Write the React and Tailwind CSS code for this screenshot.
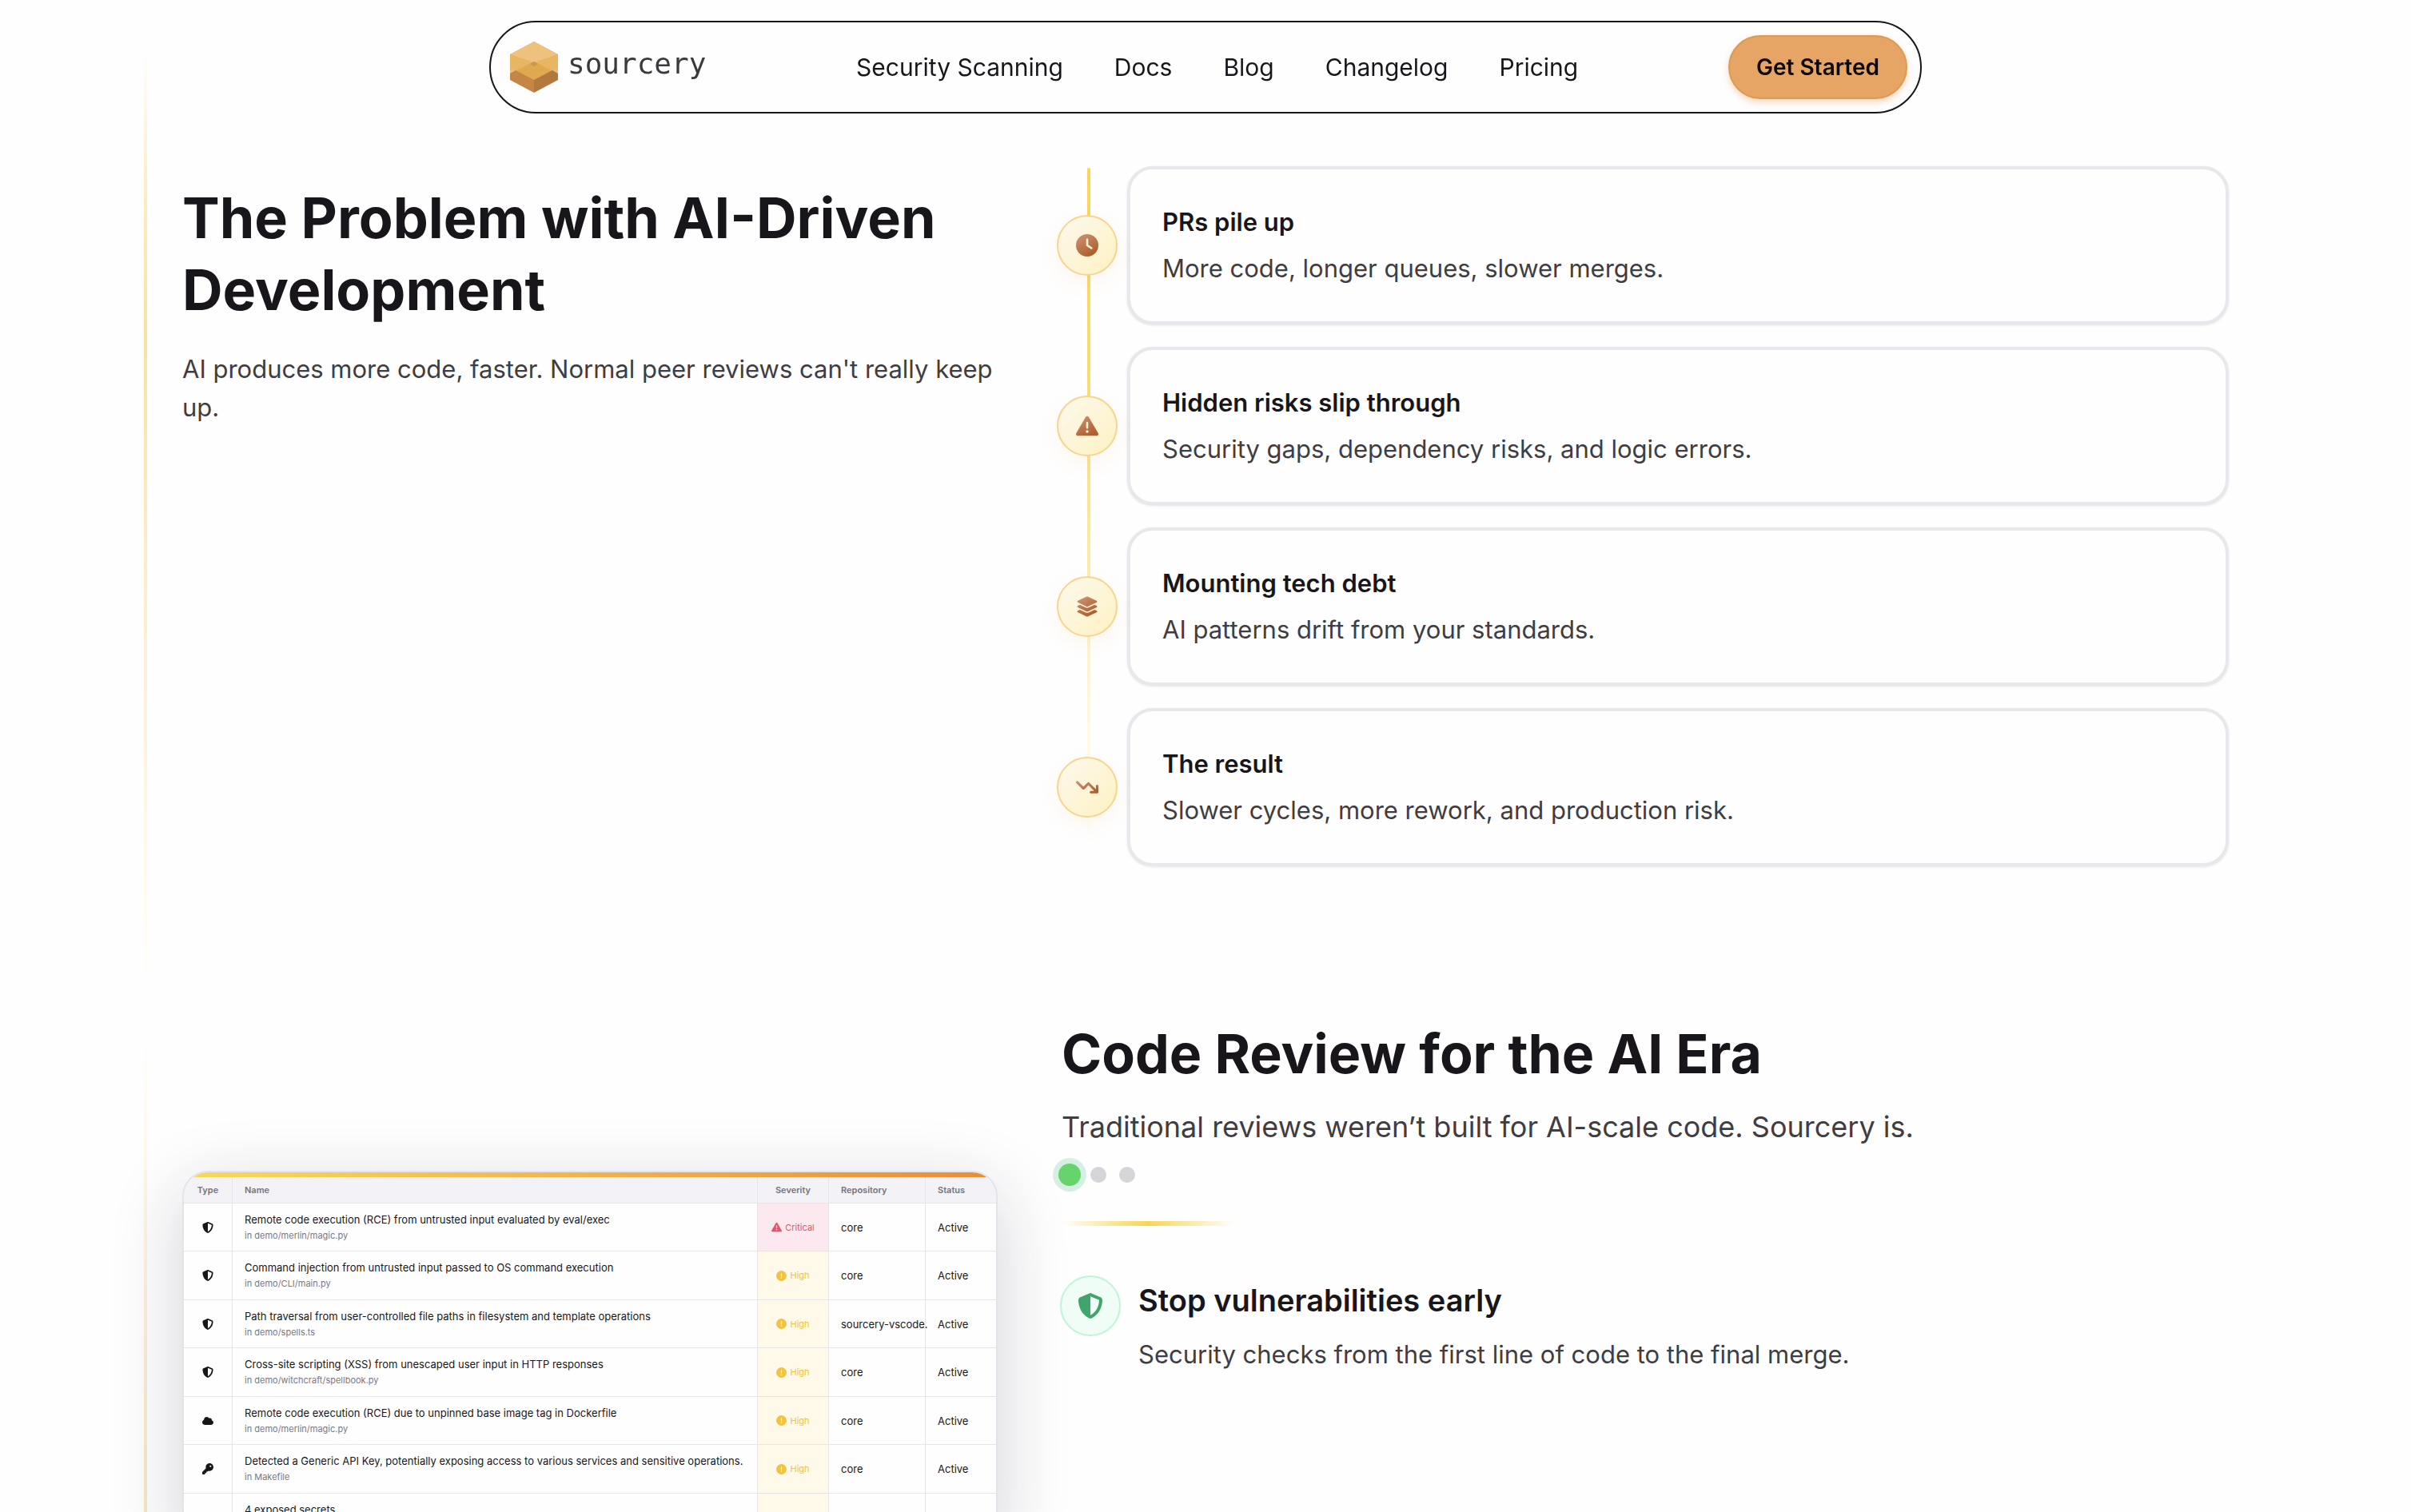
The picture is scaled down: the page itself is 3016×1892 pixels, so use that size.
import React from 'react';
import {
  FaShieldHalved,
  FaTriangleExclamation,
  FaCircleExclamation,
  FaCloud,
  FaKey,
  FaClock,
  FaLayerGroup,
  FaArrowTrendDown,
} from 'react-icons/fa6';

const links = ['Security Scanning', 'Docs', 'Blog', 'Changelog', 'Pricing'];

const problems = [
  { Icon: FaClock, title: 'PRs pile up', text: 'More code, longer queues, slower merges.' },
  { Icon: FaTriangleExclamation, title: 'Hidden risks slip through', text: 'Security gaps, dependency risks, and logic errors.' },
  { Icon: FaLayerGroup, title: 'Mounting tech debt', text: 'AI patterns drift from your standards.' },
  { Icon: FaArrowTrendDown, title: 'The result', text: 'Slower cycles, more rework, and production risk.' },
];

const findings = [
  { Icon: FaShieldHalved, name: 'Remote code execution (RCE) from untrusted input evaluated by eval/exec', path: 'in demo/merlin/magic.py', severity: 'Critical', repo: 'core' },
  { Icon: FaShieldHalved, name: 'Command injection from untrusted input passed to OS command execution', path: 'in demo/CLI/main.py', severity: 'High', repo: 'core' },
  { Icon: FaShieldHalved, name: 'Path traversal from user-controlled file paths in filesystem and template operations', path: 'in demo/spells.ts', severity: 'High', repo: 'sourcery-vscode.' },
  { Icon: FaShieldHalved, name: 'Cross-site scripting (XSS) from unescaped user input in HTTP responses', path: 'in demo/witchcraft/spellbook.py', severity: 'High', repo: 'core' },
  { Icon: FaCloud, name: 'Remote code execution (RCE) due to unpinned base image tag in Dockerfile', path: 'in demo/merlin/magic.py', severity: 'High', repo: 'core' },
  { Icon: FaKey, name: 'Detected a Generic API Key, potentially exposing access to various services and sensitive operations.', path: 'in Makefile', severity: 'High', repo: 'core' },
];

function LogoMark() {
  return (
    <svg viewBox="0 0 60 64" className="h-16 w-[60px]" aria-hidden="true">
      <polygon points="30,0 60,16 60,38 30,52 0,38 0,16" fill="#e6b25f" />
      <polygon points="30,0 60,16 30,31 0,16" fill="#eec17d" />
      <polygon points="0,16 30,26 8,36 0,40" fill="#e8b562" />
      <polygon points="60,16 30,26 52,36 60,40" fill="#e8b562" />
      <polygon points="0,35 8,36 0,40" fill="#e9bb8b" />
      <polygon points="60,35 52,36 60,40" fill="#e9bb8b" />
      <polygon points="30,25 53,37 30,48 7,37" fill="#dfa94f" />
      <polygon points="30,25 35,28 30,31 25,28" fill="#c49a4e" />
      <polygon points="0,40 7,36 30,48 30,64 0,48" fill="#c48545" />
      <polygon points="60,40 53,36 30,48 30,64 60,48" fill="#b2783f" />
    </svg>
  );
}

function Header() {
  return (
    <header className="fixed inset-x-0 top-[26px] z-10 px-12">
      <div className="mx-auto flex h-[116px] max-w-[1792px] items-center justify-between rounded-full border-2 border-[#18161a] bg-[#fefefe] pl-6 pr-4">
        <a href="#home" className="flex items-center gap-3" aria-label="sourcery">
          <LogoMark />
          <span className="pb-2 font-['DejaVu_Sans_Mono',monospace] text-4xl leading-10 text-[#3d3a3f]">sourcery</span>
        </a>
        <nav className="flex items-center gap-16 text-[30px] leading-10">
          {links.map((l) => (
            <a key={l} href={'#' + l.toLowerCase().replace(' ', '-')}>
              {l}
            </a>
          ))}
        </nav>
        <button
          type="button"
          className="h-20 rounded-full border-2 border-[#dc9a52] bg-[#e6a565] px-[33px] text-[28px] font-semibold leading-10 text-[#0c0a08] shadow-[0_4px_8px_rgba(230,140,60,0.35)]"
        >
          Get Started
        </button>
      </div>
    </header>
  );
}

function Problem() {
  return (
    <section className="mx-auto flex max-w-[2656px] gap-11 pr-12">
      <div className="w-1 shrink-0 bg-[linear-gradient(to_bottom,transparent_5%,#fdeecb_18%,#f9e2a0_34%,#fdebc8_54%,#fdf2dc_74%,#fffae8_88%,transparent)]" />
      <div className="grid grow grid-cols-[51fr_73fr] gap-20 pb-[156px] pt-[208px]">
        <div className="pt-5">
          <h2 className="text-[70px] font-bold leading-[90px]">The Problem with AI-Driven Development</h2>
          <p className="mt-[30px] text-[31px] leading-[48px] text-[#3f3d42]">
            AI produces more code, faster. Normal peer reviews can't really keep up.
          </p>
        </div>
        <ol className="relative -ml-1.5 flex flex-col gap-7">
          <li
            role="presentation"
            className="absolute bottom-7 left-[38px] top-0.5 w-1 rounded-full bg-[linear-gradient(to_bottom,#fbd45c,#f7dc72_30%,#fae696_50%,#fdf3c8_70%,transparent)]"
          />
          {problems.map(({ Icon, title, text }) => (
            <li key={title} className="relative flex items-center gap-3">
              <span className="flex size-[76px] shrink-0 items-center justify-center rounded-full border-2 border-[#f4d68f] bg-linear-to-br from-[#fef8ec] to-[#fcf2c2] shadow-[0_8px_24px_rgba(240,170,90,0.1)]">
                <Icon className="h-7 w-auto" fill="url(#bronze)" />
              </span>
              <div className="flex grow flex-col gap-2.5 rounded-[32px] border-4 border-[#e9e7eb] bg-[#fefefe] px-10 py-[42px] shadow-[0_1px_3px_rgba(40,30,50,0.12)]">
                <h3 className="text-[31px] font-semibold leading-[48px]">{title}</h3>
                <p className="text-[31px] leading-[48px] text-[#3f3d42]">{text}</p>
              </div>
            </li>
          ))}
        </ol>
      </div>
    </section>
  );
}

function Severity({ level }) {
  const critical = level === 'Critical';
  const Icon = critical ? FaTriangleExclamation : FaCircleExclamation;
  return (
    <td className={'border-b border-r border-[#e7e5ea] text-[11px] ' + (critical ? 'bg-[#fce9ef] text-[#dc5870]' : 'bg-[#fef9e8] text-[#efc441]')}>
      <span className="flex items-center justify-center gap-1">
        <Icon className="size-[13px]" />
        {level}
      </span>
    </td>
  );
}

function FindingsTable() {
  return (
    <div className="overflow-hidden rounded-[32px] border-2 border-[#e5e3e8] bg-[#fefefe] shadow-[0_24px_90px_rgba(40,25,60,0.2)]">
      <div className="h-1.5 bg-linear-to-r from-[#f7d95c] via-[#f2b24a] to-[#ea8c37]" />
      <table className="w-full table-fixed border-separate border-spacing-0 text-left text-[13px] leading-5">
        <colgroup>
          <col className="w-[61px]" />
          <col />
          <col className="w-[89px]" />
          <col className="w-[121px]" />
          <col className="w-[88px]" />
        </colgroup>
        <thead>
          <tr className="h-[33px] bg-[#f3f2f6] text-[11px] text-[#77747d] [&>th]:border-b [&>th]:border-[#e7e5ea] [&>th]:font-semibold">
            <th scope="col" className="border-r text-center">Type</th>
            <th scope="col" className="border-r px-[15px]">Name</th>
            <th scope="col" className="border-r text-center">Severity</th>
            <th scope="col" className="border-r px-[15px]">Repository</th>
            <th scope="col" className="px-[15px]">Status</th>
          </tr>
        </thead>
        <tbody>
          {findings.map(({ Icon, name, path, severity, repo }) => (
            <tr key={name} className="h-[60px] even:h-[61px]">
              <td className="border-b border-r border-[#e7e5ea]">
                <Icon className="mx-auto h-3.5 w-auto" />
              </td>
              <td className="whitespace-nowrap border-b border-r border-[#e7e5ea] px-[15px]">
                <div>{name}</div>
                <div className="text-[11px] text-[#7b7881]">{path}</div>
              </td>
              <Severity level={severity} />
              <td className="whitespace-nowrap border-b border-r border-[#e7e5ea] pl-[15px]">{repo}</td>
              <td className="border-b border-[#e7e5ea] px-[15px]">Active</td>
            </tr>
          ))}
          <tr className="h-[60px] align-top">
            <td className="border-r border-[#e7e5ea]" />
            <td className="border-r border-[#e7e5ea] px-[15px] pt-2.5">4 exposed secrets</td>
            <td className="border-r border-[#e7e5ea] bg-[#fef9e8]" />
            <td className="border-r border-[#e7e5ea]" />
            <td />
          </tr>
        </tbody>
      </table>
    </div>
  );
}

function CodeReview() {
  return (
    <section className="mx-auto flex max-w-[2656px] gap-11 pr-12">
      <div className="w-1 shrink-0 bg-[linear-gradient(to_bottom,transparent_8%,#fdf6e4_35%,#f8ead0_75%,#f6e6c4)]" />
      <div className="grid grow grid-cols-[51fr_73fr] items-start gap-20">
        <div className="pt-[225px]">
          <FindingsTable />
        </div>
        <div className="pt-9">
          <h2 className="text-[68px] font-bold leading-[84px]">Code Review for the AI Era</h2>
          <p className="mt-[26px] text-4xl leading-[48px] text-[#3f3d42]">
            Traditional reviews weren’t built for AI-scale code. Sourcery is.
          </p>
          <div className="mt-[26px] flex gap-4">
            <button type="button" aria-label="Slide 1" className="size-5 scale-140 rounded-full bg-[#66d36d] ring-5 ring-[#d5f0e2]" />
            <button type="button" aria-label="Slide 2" className="size-5 rounded-full bg-[#d6d4d8]" />
            <button type="button" aria-label="Slide 3" className="size-5 rounded-full bg-[#d6d4d8]" />
          </div>
          <div className="mt-12 h-1.5 w-[216px] rounded-full bg-linear-to-r from-transparent via-[#f8d550] to-transparent" />
          <div className="-ml-0.5 mt-[62px] flex items-start gap-[22px]">
            <span className="flex size-[76px] shrink-0 items-center justify-center rounded-full border-2 border-[#bff5d6] bg-[#effdf6]">
              <FaShieldHalved className="size-8 text-[#3fa56b]" />
            </span>
            <div className="flex flex-col gap-5 pt-[7px]">
              <h3 className="text-[38px] font-semibold leading-[48px]">Stop vulnerabilities early</h3>
              <p className="text-[31px] leading-[48px] text-[#3f3d42]">
                Security checks from the first line of code to the final merge.
              </p>
            </div>
          </div>
        </div>
      </div>
    </section>
  );
}

export default function App() {
  return (
    <div className="h-screen overflow-hidden bg-[#fefefe] font-[Inter,sans-serif] text-[#18161a]">
      <svg className="absolute size-0" aria-hidden="true">
        <defs>
          <linearGradient id="bronze" x1="0" y1="0" x2="0.6" y2="1">
            <stop offset="0" stopColor="#d09478" />
            <stop offset="1" stopColor="#ad5f2c" />
          </linearGradient>
        </defs>
      </svg>
      <Header />
      <main>
        <Problem />
        <CodeReview />
      </main>
    </div>
  );
}
